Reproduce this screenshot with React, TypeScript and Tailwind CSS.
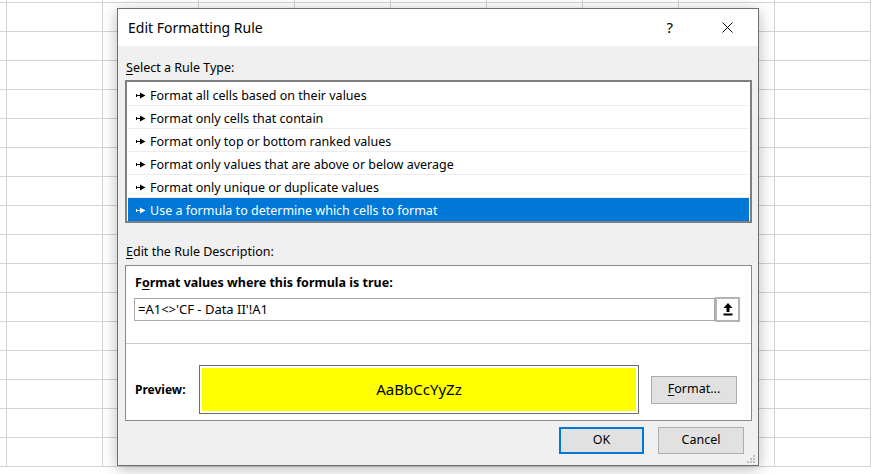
import React from 'react'

const font = { fontFamily: '"Noto Sans", "Open Sans", sans-serif' }

const rules = [
    'Format all cells based on their values',
    'Format only cells that contain',
    'Format only top or bottom ranked values',
    'Format only values that are above or below average',
    'Format only unique or duplicate values',
    'Use a formula to determine which cells to format',
]

const Pointer = () => (
    <svg width="10" height="7" viewBox="0 0 10 7" className="shrink-0">
        <path d="M0 2h1v3H0zM1 3h3v1H1zM4 0.5L9.5 3.5L4 6.5z" fill="currentColor" />
    </svg>
)

const App = () => {
    const cells = Array.from({ length: 10 * 17 })

    return (
        <div className="relative w-[871px] h-[474px] overflow-hidden bg-white text-black" style={font}>
            {/* sheet behind the dialog */}
            <div className="grid grid-cols-[repeat(10,96px)] auto-rows-[29px] ml-[-89px] mt-[-26px] w-max">
                {cells.map((_, i) => (
                    <div key={i} className="border-r border-b border-[#d4d4d4]"></div>
                ))}
            </div>

            <div className="absolute left-[117px] top-[8px] w-[642px] h-[458px] border border-[#6f6f6f] bg-[#f0f0f0] flex flex-col shadow-[0_3px_14px_rgba(0,0,0,0.28)]">
                {/* title bar */}
                <div className="h-[37px] bg-white flex items-center shrink-0">
                    <span className="pl-[10px] text-[14px] leading-none flex-1">Edit Formatting Rule</span>
                    <span className="text-[15px] leading-none mr-[49px]">?</span>
                    <svg width="11" height="11" viewBox="0 0 11 11" className="mr-[25px]">
                        <path d="M0.5 0.5L10.5 10.5M10.5 0.5L0.5 10.5" stroke="#000" strokeWidth="1" />
                    </svg>
                </div>

                <div className="flex-1 flex flex-col pl-[7px] pr-[6px]">
                    <div className="pt-[14px] text-[12.5px] leading-[16px] pl-px">
                        <span className="underline underline-offset-2">S</span>elect a Rule Type:
                    </div>

                    <div className="mt-[4px] h-[143px] border-2 border-[#7f7f7f] bg-white flex flex-col pt-px pl-px pr-px">
                        {rules.map((r, i) => (
                            <div
                                key={r}
                                className={
                                    i === rules.length - 1
                                        ? 'h-[23px] flex items-center gap-[4px] pl-[8px] bg-[#0078d7] text-white text-[12.5px] border-b border-[#0078d7]'
                                        : 'h-[23px] flex items-center gap-[4px] pl-[8px] text-[12.5px] border-b border-[#ececec]'
                                }
                            >
                                <span className="pt-[2px] flex"><Pointer /></span>
                                <span className="pt-[4px]">{r}</span>
                            </div>
                        ))}
                    </div>

                    <div className="mt-[21px] text-[12.5px] leading-[16px] pl-px">
                        <span className="underline underline-offset-2">E</span>dit the Rule Description:
                    </div>

                    <div className="mt-[5px] h-[156px] border border-[#8a8a8a] bg-white flex flex-col">
                        <div className="pt-[9px] pl-[9px] text-[12.5px] leading-[16px] font-bold">
                            F<span className="underline underline-offset-2">o</span>rmat values where this formula is true:
                        </div>
                        <div className="mt-[6px] pl-[8px] pr-[11px] flex items-center h-[25px]">
                            <div className="flex-1 h-[23px] border border-[#a9a9a9] bg-white flex items-center pl-[3px] text-[13px]">
                                =A1&lt;&gt;'CF - Data II'!A1
                            </div>
                            <div className="w-[25px] h-[25px] border-2 border-[#b3b3b3] bg-white flex items-center justify-center">
                                <svg width="10" height="13" viewBox="0 0 10 13">
                                    <path d="M5 0L9.5 5H6.5V9H3.5V5H0.5z" fill="#000" />
                                    <rect x="0.5" y="10.5" width="9" height="2" fill="#000" />
                                </svg>
                            </div>
                        </div>

                        <div className="mt-[21px] h-px bg-[#c9c9c9]"></div>

                        <div className="mt-[21px] pl-[9px] flex items-center">
                            <div className="w-[64px] text-[12px] font-bold">Preview:</div>
                            <div className="w-[440px] h-[49px] border border-[#6d6d6d] p-[2px] bg-white">
                                <div className="w-full h-full bg-[#ffff00] flex items-center justify-center text-[15px]">
                                    AaBbCcYyZz
                                </div>
                            </div>
                            <button className="ml-[12px] w-[86px] h-[28px] border border-[#adadad] bg-[#e1e1e1] text-[12.5px] flex items-center justify-center">
                                <span className="underline underline-offset-2">F</span>ormat...
                            </button>
                        </div>
                    </div>

                    <div className="mt-[6px] flex justify-end gap-[14px] mr-[8px]">
                        <button className="w-[85px] h-[27px] border-2 border-[#0078d7] bg-[#e1e1e1] text-[12.5px]">OK</button>
                        <button className="w-[86px] h-[27px] border border-[#adadad] bg-[#e1e1e1] text-[12.5px]">Cancel</button>
                    </div>

                    <div className="flex justify-end mt-auto mb-[2px] mr-[-4px]">
                        <svg width="10" height="10" viewBox="0 0 10 10">
                            <g fill="#bdbdbd">
                                <rect x="7" y="1" width="2" height="2" />
                                <rect x="4" y="4" width="2" height="2" />
                                <rect x="7" y="4" width="2" height="2" />
                                <rect x="1" y="7" width="2" height="2" />
                                <rect x="4" y="7" width="2" height="2" />
                                <rect x="7" y="7" width="2" height="2" />
                            </g>
                        </svg>
                    </div>
                </div>
            </div>
        </div>
    )
}

export default App
